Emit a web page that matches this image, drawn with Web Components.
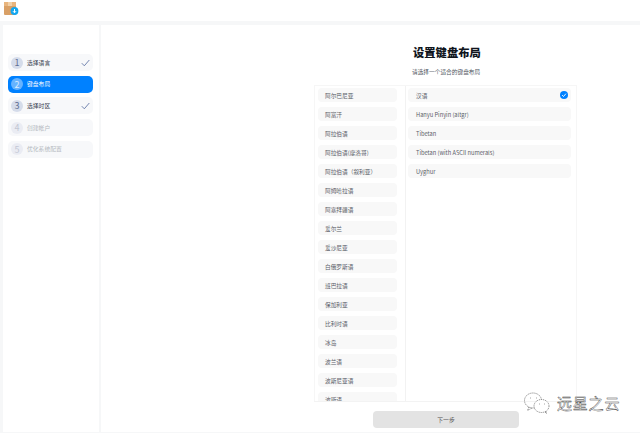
<!DOCTYPE html>
<html>
<head>
<meta charset="utf-8">
<style>
html, body { margin: 0; height: 100%; background: #f6f7f8; overflow: hidden; }
body { font-family: "Noto Sans CJK SC", "Noto Sans", sans-serif; }
</style>
</head>
<body>
<installer-app></installer-app>
<script>
class StepItem extends HTMLElement {
    constructor() {
        super();
        this.shadowDOM = this.attachShadow({ mode: "open" });
    }
    connectedCallback() {
        const state = this.getAttribute("state") || "";
        this.shadowDOM.innerHTML = `
        <style>
        :host { display: flex; align-items: center; height: 17px; padding: 0 3px 0 3px; border-radius: 5px; background: #f7f8fa; font-size: 5.8px; color: #3b4352; gap: 4px; }
        :host([state="active"]) { background: #0081ff; color: #fff; }
        :host([state="off"]) { color: #b4b8c0; }
        .num { width: 12px; height: 12px; border-radius: 50%; background: #d5dcea; color: #5f6f94; font-size: 9px; display: flex; align-items: center; justify-content: center; }
        :host([state="active"]) .num { background: #66b3ff; color: #d7ebff; }
        :host([state="off"]) .num { background: #eaecf3; color: #c2c7d4; }
        .label { flex: 1; padding-bottom: 1px; }
        svg { width: 9px; height: 8px; display: block; }
        </style>
        <span class="num">${this.getAttribute("num")}</span>
        <span class="label"><slot></slot></span>
        ${state === "done" ? `<svg viewBox="0 0 9 8"><path d="M.8 4.2 3.3 6.8 8.3 1" fill="none" stroke="#6478a8" stroke-width=".9"/></svg>` : ""}
        `;
    }
}
customElements.define("step-item", StepItem);

class ListRow extends HTMLElement {
    constructor() {
        super();
        this.shadowDOM = this.attachShadow({ mode: "open" });
    }
    connectedCallback() {
        this.shadowDOM.innerHTML = `
        <style>
        :host { display: flex; flex: none; align-items: center; justify-content: space-between; height: 14px; padding: 0 3px 0 8px; border-radius: 4px; background: #f8f8f8; font-size: 5.7px; color: #5b6068; white-space: nowrap; }
        svg { width: 8px; height: 8px; display: block; }
        </style>
        <span><slot></slot></span>
        ${this.hasAttribute("checked") ? `<svg viewBox="0 0 8 8"><circle cx="4" cy="4" r="4" fill="#0081ff"/><path d="M2.1 4.1 3.5 5.5 5.9 2.7" fill="none" stroke="#fff" stroke-width=".9"/></svg>` : ""}
        `;
    }
}
customElements.define("list-row", ListRow);

class SideBar extends HTMLElement {
    constructor() {
        super();
        this.shadowDOM = this.attachShadow({ mode: "open" });
    }
    connectedCallback() {
        this.shadowDOM.innerHTML = `
        <style>
        :host { display: flex; flex-direction: column; gap: 4.7px; width: 85px; padding: 29px 6px 0 5px; margin-left: 3px; background: #fff; flex: none; }
        </style>
        <step-item num="1" state="done">选择语言</step-item>
        <step-item num="2" state="active">键盘布局</step-item>
        <step-item num="3" state="done">选择时区</step-item>
        <step-item num="4" state="off">创建帐户</step-item>
        <step-item num="5" state="off">优化系统配置</step-item>
        `;
    }
}
customElements.define("side-bar", SideBar);

class KeyboardPage extends HTMLElement {
    constructor() {
        super();
        this.shadowDOM = this.attachShadow({ mode: "open" });
    }
    connectedCallback() {
        const langs = ["阿尔巴尼亚", "阿富汗", "阿拉伯语", "阿拉伯语(摩洛哥)", "阿拉伯语（叙利亚）", "阿姆哈拉语", "阿塞拜疆语", "爱尔兰", "爱沙尼亚", "白俄罗斯语", "班巴拉语", "保加利亚", "比利时语", "冰岛", "波兰语", "波斯尼亚语", "波斯语"];
        this.shadowDOM.innerHTML = `
        <style>
        :host { display: flex; flex-direction: column; flex: 1; margin-left: 2px; background: #fff; min-width: 0; position: relative; }
        header { margin-left: 311px; height: 60px; display: flex; flex-direction: column; }
        h1 { margin: 18px 0 0 1px; font-size: 11.3px; line-height: 18px; font-weight: 900; color: #10151d; }
        p { margin: 6px 0 0; font-size: 5.7px; line-height: 10px; color: #4e5560; }
        .lists { display: flex; height: 315px; margin-left: 213px; width: 263px; border-top: 1px solid #f6f6f6; border-bottom: 1px solid #f3f3f3; overflow: hidden; }
        .col { display: flex; flex-direction: column; gap: 5px; overflow: hidden; box-sizing: border-box; }
        .left { width: 92px; padding: 2px 8px 0 3px; border-left: 1px solid #f6f6f6; border-right: 1px solid #f2f2f2; }
        .left list-row { padding-left: 7px; }
        .right { flex: 1; padding: 2px 5px 0 2px; border-right: 1px solid #f6f6f6; }
        button { display: block; margin: 9px 0 0 272px; width: 146px; height: 17px; border: 0; border-radius: 4px; background: #e3e3e3; color: #555; font: 5.8px "Noto Sans CJK SC", sans-serif; }
        .mark { position: absolute; left: 423px; top: 367px; display: flex; align-items: center; gap: 7px; }
        .mark svg { width: 26px; height: 22px; display: block; }
        .mark span { font-size: 15px; line-height: 20px; letter-spacing: .8px; color: #fff; -webkit-text-stroke: .4px #333; }
        </style>
        <header>
            <h1>设置键盘布局</h1>
            <p>请选择一个适合的键盘布局</p>
        </header>
        <div class="lists">
            <div class="col left">${langs.map((l) => `<list-row>${l}</list-row>`).join("")}</div>
            <div class="col right">
                <list-row checked>汉语</list-row>
                <list-row>Hanyu Pinyin (altgr)</list-row>
                <list-row>Tibetan</list-row>
                <list-row>Tibetan (with ASCII numerals)</list-row>
                <list-row>Uyghur</list-row>
            </div>
        </div>
        <button>下一步</button>
        <div class="mark">
            <svg viewBox="0 0 26 22" fill="none" stroke="#444" stroke-width=".6" stroke-dasharray="1.2 .8">
                <ellipse cx="9" cy="8.5" rx="8.5" ry="7.5"/>
                <path d="M5 15 3.5 18.5 8 16"/>
                <ellipse cx="17.5" cy="14" rx="7.5" ry="6.5" fill="#fff"/>
                <path d="M21 20 22.5 21.5 22 19"/>
                <path d="M6 6h.8M12 6h.8M15 12h.8M20 12h.8" stroke-dasharray="none"/>
            </svg>
            <span>远星之云</span>
        </div>
        `;
    }
}
customElements.define("keyboard-page", KeyboardPage);

class InstallerApp extends HTMLElement {
    constructor() {
        super();
        this.shadowDOM = this.attachShadow({ mode: "open" });
    }
    connectedCallback() {
        this.shadowDOM.innerHTML = `
        <style>
        :host { display: flex; flex-direction: column; height: 433px; width: 640px; }
        .top { height: 21px; flex: none; background: #fff; padding: 2px 0 0 4px; box-sizing: border-box; margin-bottom: 4px; }
        .top svg { width: 15px; height: 15px; display: block; }
        .body { flex: 1; display: flex; min-height: 0; padding-bottom: 1px; }
        </style>
        <div class="top">
            <svg viewBox="0 0 15 15">
                <rect x="0" y="0" width="12" height="13" rx="1" fill="#d9a066"/>
                <rect x="0" y="0" width="12" height="4" fill="#e8b57e"/>
                <rect x="4" y="0" width="4" height="4" fill="#f1d0a8"/>
                <circle cx="10.5" cy="9" r="3.9" fill="#12a7f0"/>
                <path d="M10.5 7v3.6M9 9.2l1.5 1.6 1.5-1.6" fill="none" stroke="#fff" stroke-width="1"/>
            </svg>
        </div>
        <div class="body">
            <side-bar></side-bar>
            <keyboard-page></keyboard-page>
        </div>
        `;
    }
}
customElements.define("installer-app", InstallerApp);
</script>
</body>
</html>
